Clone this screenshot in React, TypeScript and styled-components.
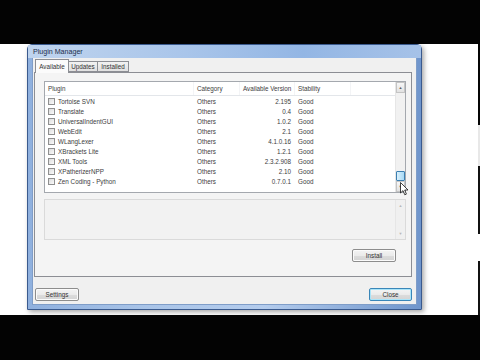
import React from "react";
import styled, { createGlobalStyle } from "styled-components";

const Global = createGlobalStyle`
  html, body { margin: 0; padding: 0; background: #ffffff; }
  body { font-family: "Liberation Sans", Arial, sans-serif; }
  * { box-sizing: border-box; }
`;

const Screen = styled.div`
  position: relative;
  width: 480px;
  height: 360px;
  overflow: hidden;
  display: flex;
  flex-direction: column;
  background: #fff;
`;

const BlackBar = styled.div<{ $h: number }>`
  height: ${(p) => p.$h}px;
  flex: none;
  background: #030303;
`;

const Middle = styled.div`
  height: 271px;
  flex: none;
  display: flex;
  background: #fff;
`;

const LeftGap = styled.div`
  width: 27px;
  flex: none;
`;

const RightGap = styled.div`
  flex: 1;
`;

const EdgeStrip = styled.div`
  width: 2px;
  flex: none;
  background: linear-gradient(#050505 0 30%, #e8e8e8 30% 45%, #111 45% 70%, #fff 70% 80%, #111 80%);
`;

const Window = styled.div`
  width: 395px;
  height: 266px;
  flex: none;
  display: flex;
  flex-direction: column;
  border: 1px solid #3a5a8e;
  border-radius: 5px 5px 0 0;
  background: linear-gradient(90deg, #8fb0de 0%, #a9c4e8 30%, #b4cced 60%, #6f95cc 100%);
  box-shadow: 2px 2px 5px rgba(0, 0, 0, 0.35);
`;

const TitleBar = styled.div`
  height: 13px;
  flex: none;
  display: flex;
  align-items: center;
  padding-left: 5px;
  font-size: 7.1px;
  color: #1d2f4c;
  background: linear-gradient(90deg, #bfd4ee 0%, #a9c5ea 40%, #93b6e4 70%, #a6c2e8 100%);
`;

const Client = styled.div`
  flex: 1;
  margin: 0 4px 4px 4px;
  display: flex;
  flex-direction: column;
  padding: 1px 4px 0 1px;
  background: #f0f0f0;
  border: 1px solid #7f9dc8;
  border-top: none;
`;

const TabStrip = styled.div`
  height: 13px;
  flex: none;
  display: flex;
  align-items: flex-end;
  padding-left: 1px;
  position: relative;
  z-index: 1;
`;

const Tab = styled.div<{ $active?: boolean; $w: number }>`
  width: ${(p) => p.$w}px;
  height: ${(p) => (p.$active ? 14 : 11)}px;
  margin-bottom: ${(p) => (p.$active ? -1 : 0)}px;
  display: flex;
  align-items: center;
  justify-content: center;
  font-size: 6.3px;
  color: #333;
  border: 1px solid #8c8e94;
  border-bottom: ${(p) => (p.$active ? "none" : "1px solid #8c8e94")};
  margin-right: -1px;
  background: ${(p) =>
    p.$active ? "#fbfbfb" : "linear-gradient(#f2f2f2, #e1e1e1)"};
`;

const Panel = styled.div`
  height: 205px;
  flex: none;
  display: flex;
  flex-direction: column;
  padding: 8px 5px 0 9px;
  border: 1px solid #8c8e94;
  background: #f4f4f4;
`;

const List = styled.div`
  height: 112px;
  flex: none;
  display: flex;
  border: 1px solid #a4a8ae;
  background: #fff;
`;

const ListBody = styled.div`
  flex: 1;
  display: flex;
  flex-direction: column;
`;

const HeaderRow = styled.div`
  height: 14px;
  flex: none;
  display: flex;
  align-items: center;
  border-bottom: 1px solid #e3e6ea;
  background: #fff;
`;

const Row = styled.div`
  height: 10.1px;
  flex: none;
  display: flex;
  align-items: center;
`;

const Cell = styled.div<{ $w: number; $right?: boolean; $head?: boolean }>`
  width: ${(p) => p.$w}px;
  flex: none;
  height: 100%;
  display: flex;
  align-items: center;
  justify-content: ${(p) => (p.$right ? "flex-end" : "flex-start")};
  padding: ${(p) => (p.$right ? "0 4px 0 0" : "0 0 0 3px")};
  font-size: 6.3px;
  color: #3c3c3c;
  white-space: nowrap;
  border-right: ${(p) => (p.$head ? "1px solid #f3f4f6" : "none")};
`;

const Check = styled.span`
  width: 7px;
  height: 7px;
  flex: none;
  margin-right: 3px;
  border: 1px solid #8f8f8f;
  background: linear-gradient(135deg, #dcdcdc, #fbfbfb);
`;

const VScroll = styled.div<{ $muted?: boolean }>`
  width: 10px;
  flex: none;
  display: flex;
  flex-direction: column;
  background: ${(p) => (p.$muted ? "#f0f0f0" : "#f1f1f1")};
  border-left: 1px solid #e6e6e6;
`;

const ScrollBtn = styled.div<{ $muted?: boolean }>`
  height: 11px;
  flex: none;
  display: flex;
  align-items: center;
  justify-content: center;
  font-size: 4px;
  color: ${(p) => (p.$muted ? "#b8b8b8" : "#606060")};
  border: ${(p) => (p.$muted ? "none" : "1px solid #c4c4c4")};
  background: ${(p) => (p.$muted ? "transparent" : "linear-gradient(#f7f7f7, #e2e2e2)")};
`;

const Track = styled.div`
  flex: 1;
  display: flex;
  flex-direction: column;
  justify-content: flex-end;
`;

const Thumb = styled.div`
  height: 10px;
  border: 1px solid #3c7fb1;
  border-radius: 1px;
  background: linear-gradient(90deg, #d9f0fc, #a7d9f5);
`;

const Description = styled.div`
  height: 41px;
  flex: none;
  margin-top: 6px;
  display: flex;
  justify-content: flex-end;
  border: 1px solid #dadada;
  background: #f2f2f2;
`;

const ActionRow = styled.div`
  display: flex;
  justify-content: flex-end;
  padding-right: 10px;
  margin-top: 9px;
`;

const Button = styled.div<{ $w: number; $default?: boolean }>`
  width: ${(p) => p.$w}px;
  height: 13px;
  display: flex;
  align-items: center;
  justify-content: center;
  font-size: 6.3px;
  color: #333;
  border-radius: 2px;
  border: 1px solid ${(p) => (p.$default ? "#3a86b8" : "#8d8d8d")};
  box-shadow: inset 0 0 0 1px ${(p) => (p.$default ? "#a9e4f9" : "#fbfbfb")};
  background: linear-gradient(#f4f4f4 0%, #ebebeb 50%, #dcdcdc 51%, #d4d4d4 100%);
`;

const BottomRow = styled.div`
  flex: 1;
  display: flex;
  justify-content: space-between;
  align-items: flex-start;
  padding: 11px 0 0 1px;
`;

const Cursor = styled.svg`
  position: absolute;
  left: 400px;
  top: 182px;
  width: 9px;
  height: 14px;
`;

const plugins: [string, string][] = [
  ["Tortoise SVN", "2.195"],
  ["Translate", "0.4"],
  ["UniversalIndentGUI", "1.0.2"],
  ["WebEdit", "2.1"],
  ["WLangLexer", "4.1.0.16"],
  ["XBrackets Lite", "1.2.1"],
  ["XML Tools", "2.3.2.908"],
  ["XPatherizerNPP", "2.10"],
  ["Zen Coding - Python", "0.7.0.1"],
];

export default function App() {
  return (
    <Screen>
      <Global />
      <BlackBar $h={44} />
      <Middle>
        <LeftGap />
        <Window>
          <TitleBar>Plugin Manager</TitleBar>
          <Client>
            <TabStrip>
              <Tab $active $w={34}>Available</Tab>
              <Tab $w={30}>Updates</Tab>
              <Tab $w={32}>Installed</Tab>
            </TabStrip>
            <Panel>
              <List>
                <ListBody>
                  <HeaderRow>
                    <Cell $w={149} $head>Plugin</Cell>
                    <Cell $w={46} $head>Category</Cell>
                    <Cell $w={55} $head>Available Version</Cell>
                    <Cell $w={56} $head>Stability</Cell>
                  </HeaderRow>
                  {plugins.map(([name, ver]) => (
                    <Row key={name}>
                      <Cell $w={149}>
                        <Check />
                        {name}
                      </Cell>
                      <Cell $w={46}>Others</Cell>
                      <Cell $w={55} $right>{ver}</Cell>
                      <Cell $w={56}>Good</Cell>
                    </Row>
                  ))}
                </ListBody>
                <VScroll>
                  <ScrollBtn>▲</ScrollBtn>
                  <Track>
                    <Thumb />
                  </Track>
                  <ScrollBtn>▼</ScrollBtn>
                </VScroll>
              </List>
              <Description>
                <VScroll $muted>
                  <ScrollBtn $muted>▲</ScrollBtn>
                  <Track />
                  <ScrollBtn $muted>▼</ScrollBtn>
                </VScroll>
              </Description>
              <ActionRow>
                <Button $w={44}>Install</Button>
              </ActionRow>
            </Panel>
            <BottomRow>
              <Button $w={44}>Settings</Button>
              <Button $w={43} $default>Close</Button>
            </BottomRow>
          </Client>
        </Window>
        <RightGap />
        <EdgeStrip />
      </Middle>
      <BlackBar $h={45} />
      <Cursor viewBox="0 0 9 14">
        <path d="M0.5 0.5 L0.5 11 L3 8.6 L4.8 12.8 L6.4 12.1 L4.7 8 L8 8 Z" fill="#fff" stroke="#111" strokeWidth="0.8" strokeLinejoin="round" />
      </Cursor>
    </Screen>
  );
}
